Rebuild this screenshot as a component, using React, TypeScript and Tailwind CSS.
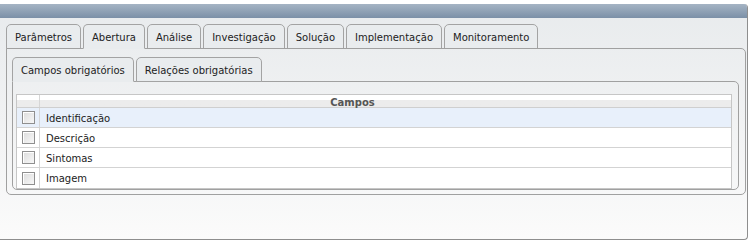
const mainTabs = ["Parâmetros", "Abertura", "Análise", "Investigação", "Solução", "Implementação", "Monitoramento"];
const subTabs = ["Campos obrigatórios", "Relações obrigatórias"];
const fields = ["Identificação", "Descrição", "Sintomas", "Imagem"];

function Checkbox() {
  return (
    <span className="block h-[13px] w-[13px] border border-[#8f8f8f] bg-gradient-to-br from-[#dcdcdc] to-[#f8f8f8] shadow-[inset_1px_1px_0_#fff]" />
  );
}

function TabRow({ tabs, active }: { tabs: string[]; active: number }) {
  return (
    <div className="flex gap-[2px]">
      {tabs.map((t, i) => (
        <div
          key={t}
          className={`relative -mb-px flex h-[25px] items-center rounded-t-[5px] border border-[#a3a3a3] bg-[#e9ecee] px-[8px] pt-[2px] text-[10px] text-[#222] ${
            i === active ? "z-10 border-b-[#e9ecee]" : ""
          }`}
        >
          {t}
        </div>
      ))}
    </div>
  );
}

export default function App() {
  return (
    <div
      className="h-[244px] w-[754px] bg-white pt-[4px]"
      style={{ fontFamily: '"DejaVu Sans", Verdana, sans-serif' }}
    >
      <div className="h-[236px] w-[748px] overflow-hidden rounded-tr-[4px] rounded-br-[4px] border-r border-b border-[#8e8e8e] bg-gradient-to-b from-[#e8ebed] via-[#f1f2f3] to-[#fbfbfb]">
        <div className="h-[14px] bg-gradient-to-b from-[#a5b4c4] to-[#7b90a7]" />
        <div className="pl-[6px] pt-[6px]">
          <TabRow tabs={mainTabs} active={1} />
          <div className="relative h-[147px] w-[740px] rounded-b-[5px] rounded-tr-[5px] border border-[#a0a0a0] pt-[8px] pl-[5px] pr-[6px]">
            <TabRow tabs={subTabs} active={0} />
            <div className="h-[109px] rounded-b-[5px] rounded-tr-[5px] border border-[#a0a0a0] pt-[12px] pl-[3px] pr-[6px]">
              <div className="border border-[#c6c6c6] bg-white">
                <div className="flex h-[13px] border-b border-[#cfcfcf] bg-gradient-to-b from-white from-40% to-[#ececec] to-40%">
                  <div className="w-[23px] border-r border-[#d6d6d6]" />
                  <div className="flex-1 pr-[66px] text-center text-[10px] font-bold leading-[15px] text-[#555]">Campos</div>
                </div>
                {fields.map((f, i) => (
                  <div
                    key={f}
                    className={`flex h-[20px] border-b border-[#d3d3d3] last:border-b-0 ${i === 0 ? "bg-[#e8f0fb]" : "bg-white"}`}
                  >
                    <div className="flex w-[23px] items-center justify-center border-r border-[#d6d6d6]">
                      <Checkbox />
                    </div>
                    <div className="flex items-center pl-[6px] pt-px text-[10px] text-[#222]">{f}</div>
                  </div>
                ))}
              </div>
            </div>
          </div>
        </div>
      </div>
    </div>
  );
}
